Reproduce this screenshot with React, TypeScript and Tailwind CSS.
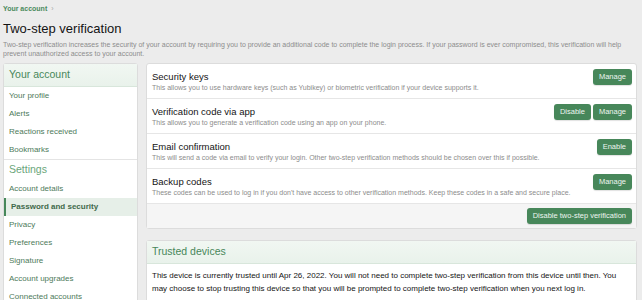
import React from "react";

const font = { fontFamily: '"Liberation Sans", Arial, sans-serif' };

const NAV = [
  { label: "Your profile" },
  { label: "Alerts" },
  { label: "Reactions received" },
  { label: "Bookmarks" },
];

const SETTINGS = [
  { label: "Account details" },
  { label: "Password and security", active: true },
  { label: "Privacy" },
  { label: "Preferences" },
  { label: "Signature" },
  { label: "Account upgrades" },
  { label: "Connected accounts" },
];

const METHODS = [
  {
    title: "Security keys",
    desc: "This allows you to use hardware keys (such as Yubikey) or biometric verification if your device supports it.",
    actions: ["Manage"],
  },
  {
    title: "Verification code via app",
    desc: "This allows you to generate a verification code using an app on your phone.",
    actions: ["Disable", "Manage"],
  },
  {
    title: "Email confirmation",
    desc: "This will send a code via email to verify your login. Other two-step verification methods should be chosen over this if possible.",
    actions: ["Enable"],
  },
  {
    title: "Backup codes",
    desc: "These codes can be used to log in if you don't have access to other verification methods. Keep these codes in a safe and secure place.",
    actions: ["Manage"],
  },
];

function Button({ children }: { children: React.ReactNode }) {
  return (
    <button className="h-4 rounded-[3px] bg-[#47875a] px-[6px] text-[7.5px] leading-4 text-[#eef5f0] shadow-[0_1px_1px_rgba(0,0,0,0.12)]">
      {children}
    </button>
  );
}

function NavItem({ label, active }: { label: string; active?: boolean }) {
  return (
    <div
      className={`flex h-[18px] items-center pl-[5px] text-[8px] ${
        active ? "border-l-2 border-[#47875a] bg-[#e6efe8] pl-[3px] font-bold text-[#3f6a4b]" : "text-[#4d7a5a]"
      }`}
    >
      {label}
    </div>
  );
}

export default function App() {
  return (
    <div style={font} className="h-[300px] w-[642px] overflow-hidden bg-[#ececec] pl-[3px] pr-[5px] pt-[4px]">
      <div className="flex h-[11px] items-center gap-[4px] text-[7px] font-bold text-[#4b8a5c]">
        Your account <span className="font-normal text-[#a8a8a8]">›</span>
      </div>
      <h1 className="mt-[4px] h-[20px] text-[13px] leading-[20px] text-[#141414]">Two-step verification</h1>
      <p className="mt-[1px] text-[7px] leading-[9px] text-[#8c8c8c]">
        Two-step verification increases the security of your account by requiring you to provide an additional code to complete the login process. If your password is ever compromised, this verification will help prevent unauthorized access to your account.
      </p>

      <div className="mt-[5px] flex gap-[8px]">
        {/* Sidebar */}
        <div className="w-[135px] shrink-0 self-start rounded-[3px] border border-[#dcdcdc] bg-white">
          <div className="flex h-[23px] items-center border-b border-[#d8e6db] bg-gradient-to-b from-[#f1f7f2] to-[#e9f2eb] pl-[5px] text-[10.5px] text-[#47875a]">
            Your account
          </div>
          {NAV.map((n) => (
            <NavItem key={n.label} {...n} />
          ))}
          <div className="flex h-[21px] items-center border-t border-[#e4e4e4] pl-[5px] text-[10.5px] text-[#6aa67a]">Settings</div>
          {SETTINGS.map((n) => (
            <NavItem key={n.label} {...n} />
          ))}
        </div>

        {/* Main */}
        <div className="flex min-w-0 flex-1 flex-col">
          <div className="rounded-[3px] border border-[#dcdcdc] bg-white">
            {METHODS.map((m) => (
              <div key={m.title} className="flex h-[35px] items-start justify-between border-b border-[#e6e6e6] pl-[5px] pr-[4px] pt-[5px]">
                <div className="min-w-0">
                  <div className="mt-[2px] text-[9.5px] leading-[12px] text-[#141414]">{m.title}</div>
                  <div className="text-[7px] leading-[9px] text-[#8c8c8c]">{m.desc}</div>
                </div>
                <div className="flex shrink-0 gap-[2px]">
                  {m.actions.map((a) => (
                    <Button key={a}>{a}</Button>
                  ))}
                </div>
              </div>
            ))}
            <div className="flex h-[24px] items-center justify-end bg-[#f5f5f5] pr-[4px]">
              <Button>Disable two-step verification</Button>
            </div>
          </div>

          <div className="mt-[11px] rounded-[3px] border border-[#dcdcdc] bg-white">
            <div className="flex h-[23px] items-center border-b border-[#d8e6db] bg-gradient-to-b from-[#f1f7f2] to-[#e9f2eb] pl-[5px] text-[10.5px] text-[#47875a]">
              Trusted devices
            </div>
            <div className="px-[5px] pt-[5px]">
              <p className="text-[8px] leading-[13px] text-[#141414]">
                This device is currently trusted until Apr 26, 2022. You will not need to complete two-step verification from this device until then. You may choose to stop trusting this device so that you will be prompted to complete two-step verification when you next log in.
              </p>
              <div className="mt-[1px]">
                <Button>Stop trusting this device</Button>
              </div>
            </div>
          </div>
        </div>
      </div>
    </div>
  );
}
